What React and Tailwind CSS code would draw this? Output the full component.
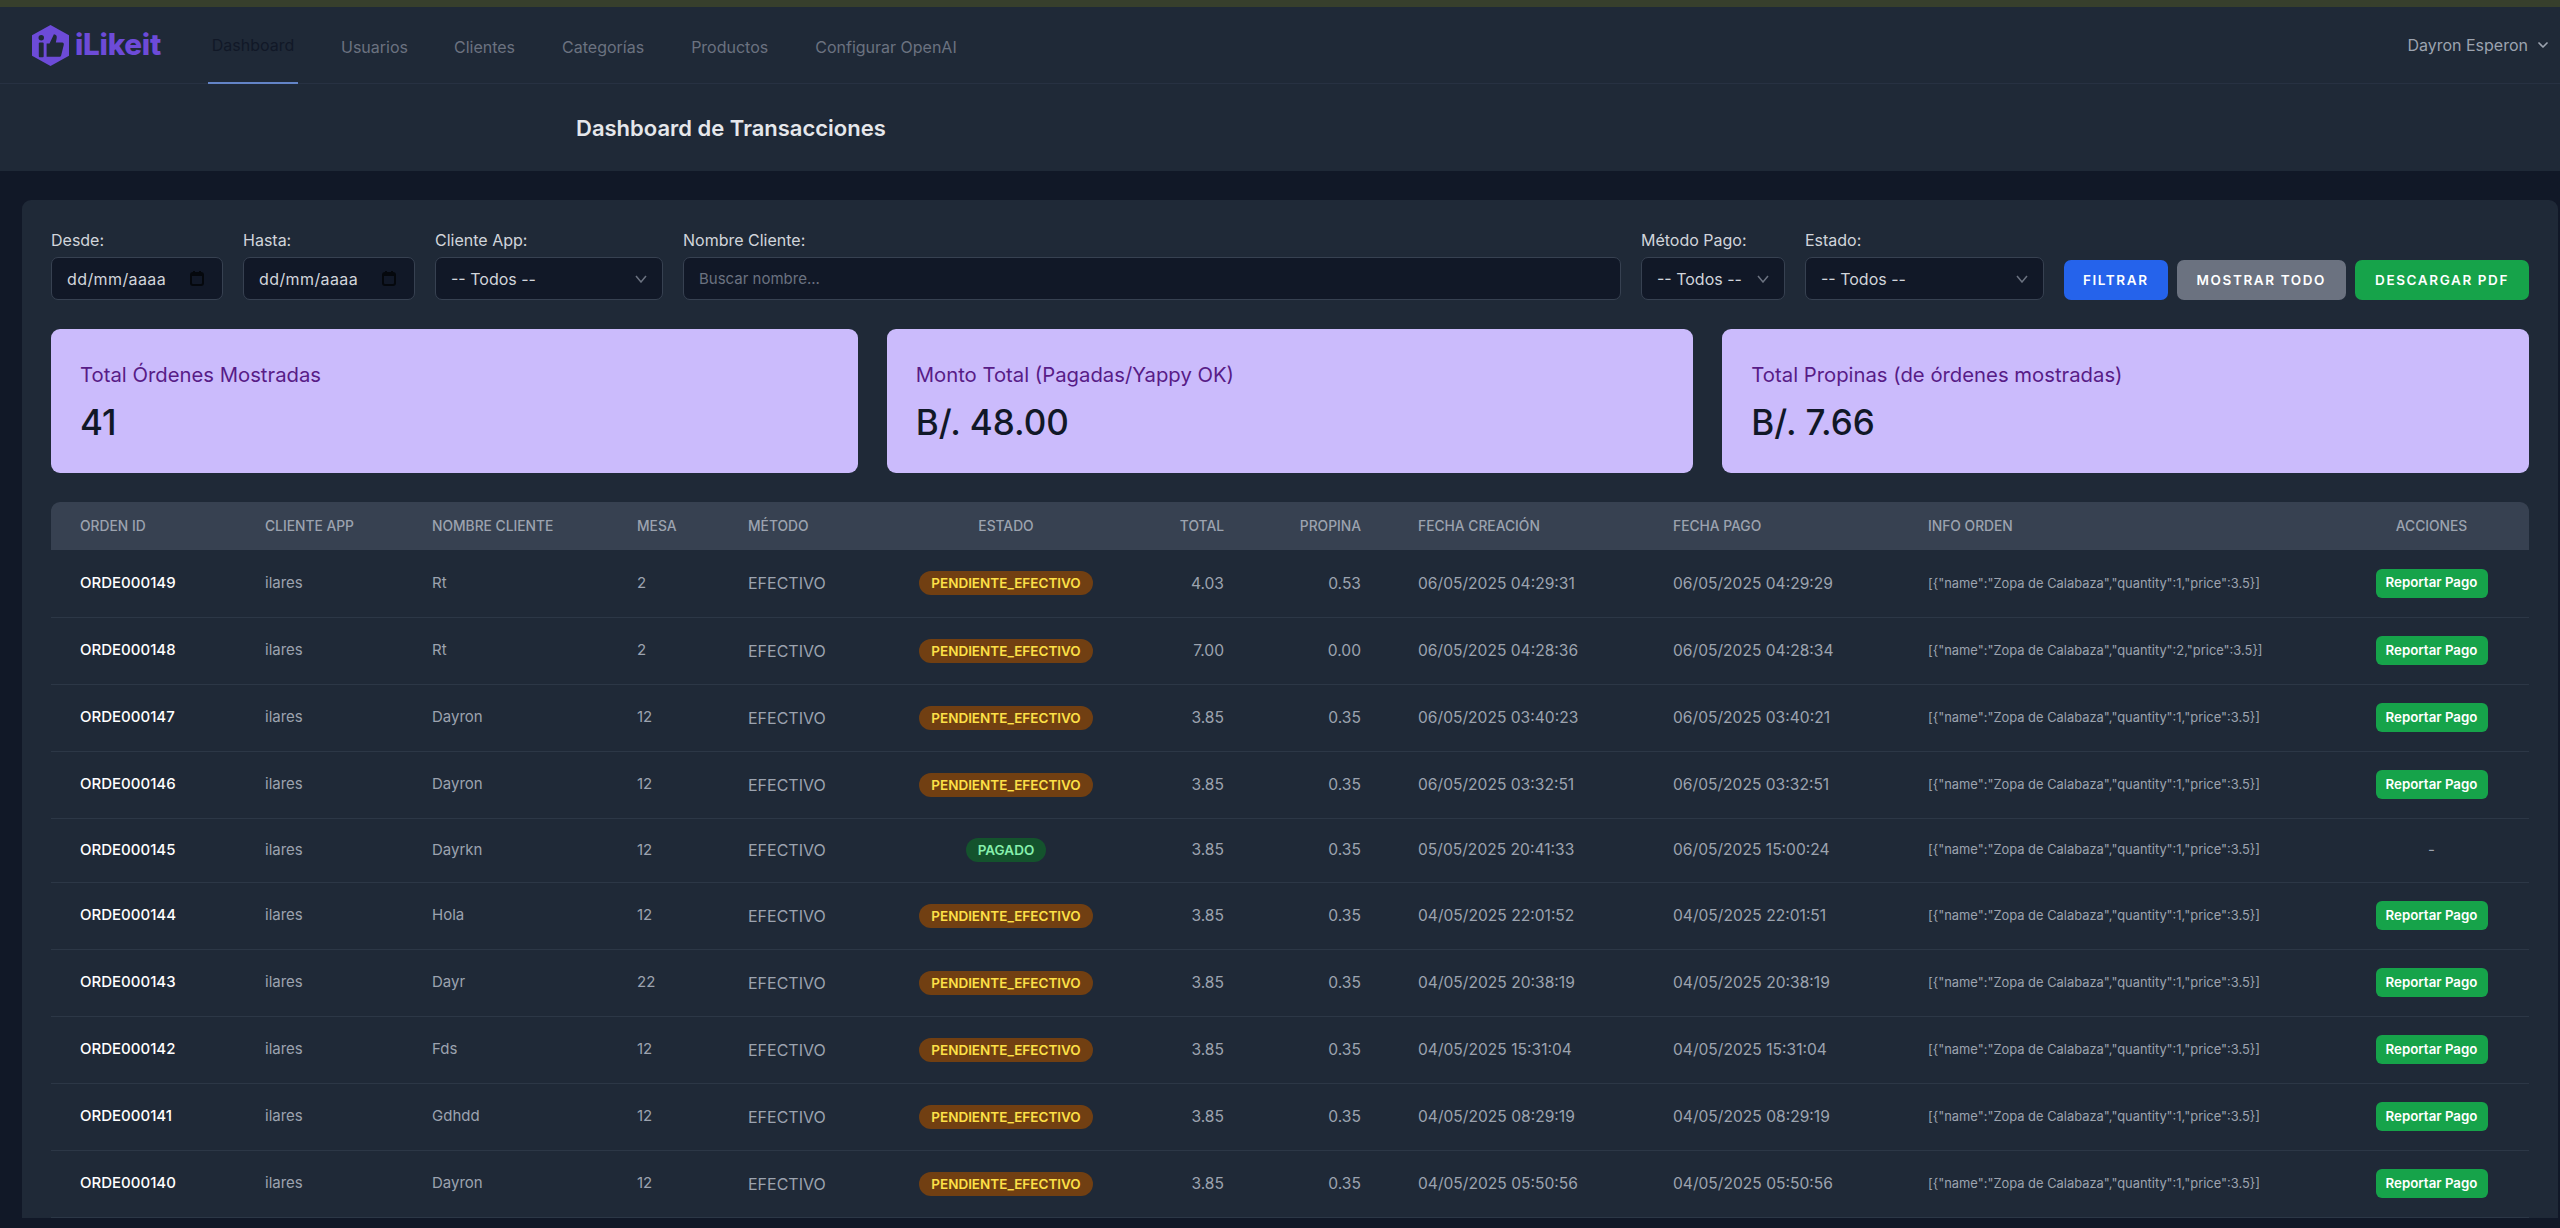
import React from "react";
import { ChevronDown } from "lucide-react";

const FONT = "font-['Inter','Liberation_Sans',sans-serif]";

const rows = [
  ["ORDE000149","Rt","2","PENDIENTE_EFECTIVO","4.03","0.53","06/05/2025 04:29:31","06/05/2025 04:29:29",1],
  ["ORDE000148","Rt","2","PENDIENTE_EFECTIVO","7.00","0.00","06/05/2025 04:28:36","06/05/2025 04:28:34",2],
  ["ORDE000147","Dayron","12","PENDIENTE_EFECTIVO","3.85","0.35","06/05/2025 03:40:23","06/05/2025 03:40:21",1],
  ["ORDE000146","Dayron","12","PENDIENTE_EFECTIVO","3.85","0.35","06/05/2025 03:32:51","06/05/2025 03:32:51",1],
  ["ORDE000145","Dayrkn","12","PAGADO","3.85","0.35","05/05/2025 20:41:33","06/05/2025 15:00:24",1],
  ["ORDE000144","Hola","12","PENDIENTE_EFECTIVO","3.85","0.35","04/05/2025 22:01:52","04/05/2025 22:01:51",1],
  ["ORDE000143","Dayr","22","PENDIENTE_EFECTIVO","3.85","0.35","04/05/2025 20:38:19","04/05/2025 20:38:19",1],
  ["ORDE000142","Fds","12","PENDIENTE_EFECTIVO","3.85","0.35","04/05/2025 15:31:04","04/05/2025 15:31:04",1],
  ["ORDE000141","Gdhdd","12","PENDIENTE_EFECTIVO","3.85","0.35","04/05/2025 08:29:19","04/05/2025 08:29:19",1],
  ["ORDE000140","Dayron","12","PENDIENTE_EFECTIVO","3.85","0.35","04/05/2025 05:50:56","04/05/2025 05:50:56",1],
];

function Field({ label, width, children }) {
  return (
    <div className={`flex flex-col gap-[7px] ${width}`}>
      <label className="text-[16px] leading-[20px] text-[#d1d5db]">{label}</label>
      {children}
    </div>
  );
}

const box = "flex h-[43px] items-center justify-between rounded-[7px] border border-[#374151] bg-[#111827] px-[15px] text-[#d1d5db]";

function DateBox() {
  return (
    <div className={box}>
      <span className="text-[16px] tracking-[0.4px]">dd/mm/aaaa</span>
      <svg width="14" height="15" viewBox="0 0 14 15" className="mr-[3px] shrink-0">
        <rect x="1" y="2" width="12" height="12" rx="2" fill="none" stroke="#05080d" strokeWidth="2" />
        <rect x="1" y="2" width="12" height="3" fill="#05080d" />
        <rect x="3" y="0" width="2" height="3" fill="#05080d" />
        <rect x="9" y="0" width="2" height="3" fill="#05080d" />
      </svg>
    </div>
  );
}

function SelectBox() {
  return (
    <div className={box}>
      <span className="text-[16px]">-- Todos --</span>
      <svg width="12" height="8" viewBox="0 0 12 8" className="shrink-0">
        <path d="M1 1L6 7L11 1" fill="none" stroke="#6b7280" strokeWidth="1.5" />
      </svg>
    </div>
  );
}

function Stat({ title, value }) {
  return (
    <div className="flex h-[144px] flex-1 flex-col rounded-[9px] bg-[#cbbbfc] px-[29px] pt-[32px]">
      <div className="text-[20.3px] leading-[28px] text-[#581c87]">{title}</div>
      <div className="mt-[13px] text-[35px] font-medium leading-[40px] text-[#111827]">{value}</div>
    </div>
  );
}

function Btn({ color, children }) {
  return (
    <button className={`h-[40px] rounded-[7px] text-[13.5px] font-semibold tracking-[1.6px] text-white ${color}`}>
      {children}
    </button>
  );
}

const th = "px-[28px] text-[13.8px] font-medium text-[#9ca3af] uppercase";

export default function App() {
  return (
    <div className={`flex h-[1228px] flex-col overflow-hidden bg-[#111827] ${FONT}`}>
      <div className="h-[7px] shrink-0 bg-[#373f2c]" />
      <nav className="flex h-[77px] shrink-0 items-stretch justify-between border-b border-[#273142] bg-[#1f2937] pl-[32px] pr-[9px]">
        <div className="flex items-stretch">
          <div className="flex w-[176px] items-center gap-[6px]">
            <svg width="37" height="41" viewBox="0 0 38 42" className="shrink-0">
              <path d="M19 0L38 10.5V31.5L19 42L0 31.5V10.5Z" fill="#6d4bd8" />
              <circle cx="9.5" cy="13" r="2.8" fill="#1f2937" />
              <rect x="7" y="18" width="5" height="15" rx="1" fill="#1f2937" />
              <path d="M15 19h3l4.5-9.5c2.4.2 3.4 2 2.8 4.2L24.5 18H31c1.4 0 2 1.2 1.6 2.4l-2.6 10.6c-.3 1-1 1.6-2 1.6H15Z" fill="#1f2937" />
            </svg>
            <span className="text-[29.7px] font-extrabold leading-none tracking-[-0.3px] text-[#6d4bd8]">iLikeit</span>
          </div>
          <div className="flex items-stretch pt-[3px] text-[16px] text-[#6b7280]">
            <a className="-mb-px flex w-[90px] items-center justify-center border-b-2 border-[#6384c7] pb-[2px] text-[#111827]">Dashboard</a>
            <a className="ml-[43px] flex items-center">Usuarios</a>
            <a className="ml-[46px] flex items-center">Clientes</a>
            <a className="ml-[47px] flex items-center">Categorías</a>
            <a className="ml-[47px] flex items-center">Productos</a>
            <a className="ml-[47px] flex items-center">Configurar OpenAI</a>
          </div>
        </div>
        <div className="flex items-center gap-[7px] text-[16px] text-[#9ca3af]">
          <span>Dayron Esperon</span>
          <ChevronDown size={16} strokeWidth={2.5} />
        </div>
      </nav>
      <header className="flex h-[87px] shrink-0 items-center bg-[#1f2937] pl-[576px]">
        <h1 className="text-[22px] font-semibold leading-none text-[#e5e7eb]">Dashboard de Transacciones</h1>
      </header>

      <main className="flex min-h-0 flex-1 flex-col pb-[10px] pl-[22px] pr-[2px] pt-[29px]">
        <div className="flex min-h-0 flex-1 flex-col overflow-hidden rounded-t-[9px] bg-[#1f2937] pl-[29px] pr-[29px] pt-[30px]">
          <div className="flex items-end gap-[20px]">
            <Field label="Desde:" width="w-[172px]"><DateBox /></Field>
            <Field label="Hasta:" width="w-[172px]"><DateBox /></Field>
            <Field label="Cliente App:" width="w-[228px]"><SelectBox /></Field>
            <Field label="Nombre Cliente:" width="flex-1">
              <input placeholder="Buscar nombre..." className="h-[43px] rounded-[7px] border border-[#374151] bg-[#111827] px-[15px] text-[15px] text-[#d1d5db] placeholder:text-[#6b7280]" />
            </Field>
            <Field label="Método Pago:" width="w-[144px]"><SelectBox /></Field>
            <Field label="Estado:" width="w-[239px]"><SelectBox /></Field>
            <div className="flex gap-[9px]">
              <Btn color="bg-[#2563eb] px-[19px]">FILTRAR</Btn>
              <Btn color="bg-[#6b7280] px-[20px]">MOSTRAR TODO</Btn>
              <Btn color="bg-[#16a34a] px-[20px]">DESCARGAR PDF</Btn>
            </div>
          </div>

          <div className="mt-[29px] flex gap-[29px]">
            <Stat title="Total Órdenes Mostradas" value="41" />
            <Stat title="Monto Total (Pagadas/Yappy OK)" value="B/. 48.00" />
            <Stat title="Total Propinas (de órdenes mostradas)" value="B/. 7.66" />
          </div>

          <table className="mt-[29px] w-full table-fixed border-collapse">
            <colgroup>
              <col className="w-[186px]" />
              <col className="w-[167px]" />
              <col className="w-[205px]" />
              <col className="w-[111px]" />
              <col className="w-[172px]" />
              <col className="w-[228px]" />
              <col className="w-[132px]" />
              <col className="w-[137px]" />
              <col className="w-[256px]" />
              <col className="w-[254px]" />
              <col className="w-[435px]" />
              <col />
            </colgroup>
            <thead>
              <tr className="h-[48px] bg-[#374151]">
                <th className={`${th} rounded-tl-[9px] text-left`}><span className="ml-px">Orden ID</span></th>
                <th className={`${th} text-left`}>Cliente App</th>
                <th className={`${th} text-left`}>Nombre Cliente</th>
                <th className={`${th} text-left`}>Mesa</th>
                <th className={`${th} text-left`}>Método</th>
                <th className={`${th} text-center`}>Estado</th>
                <th className={`${th} text-right`}>Total</th>
                <th className={`${th} text-right`}>Propina</th>
                <th className={`${th} text-left`}><span className="ml-px">Fecha Creación</span></th>
                <th className={`${th} text-left`}>Fecha Pago</th>
                <th className={`${th} text-left`}><span className="ml-px">Info Orden</span></th>
                <th className={`${th} rounded-tr-[9px] text-center`}>Acciones</th>
              </tr>
            </thead>
            <tbody className="text-[15px] text-[#9ca3af]">
              {rows.map((r) => {
                const paid = r[3] === "PAGADO";
                return (
                  <tr key={r[0]} className={`border-b border-[#2c3746] ${paid ? "h-[64px]" : "h-[67px]"}`}>
                    <td className="pl-[29px] pr-[27px] font-medium text-white">{r[0]}</td>
                    <td className="px-[28px]">ilares</td>
                    <td className="px-[28px]">{r[1]}</td>
                    <td className="px-[28px]">{r[2]}</td>
                    <td className="px-[28px] text-[16px]">EFECTIVO</td>
                    <td className="px-0 text-center">
                      {paid ? (
                        <span className="inline-block rounded-full bg-[#14532d] px-[12px] text-[13.5px] font-semibold leading-[24px] text-[#86efac]">PAGADO</span>
                      ) : (
                        <span className="inline-block rounded-full bg-[#713f12] px-[12px] text-[13.5px] font-semibold leading-[24px] text-[#fde047]">PENDIENTE_EFECTIVO</span>
                      )}
                    </td>
                    <td className="px-[28px] text-right text-[15.6px]">{r[4]}</td>
                    <td className="px-[28px] text-right text-[15.6px]">{r[5]}</td>
                    <td className="pl-[29px] pr-[27px] text-[15.6px]">{r[6]}</td>
                    <td className="px-[28px] text-[15.6px]">{r[7]}</td>
                    <td className="pl-[29px] pr-[27px] text-[12.9px]">{`[{"name":"Zopa de Calabaza","quantity":${r[8]},"price":3.5}]`}</td>
                    <td className="px-0 text-center">
                      {paid ? "-" : (
                        <button className="h-[29px] w-[112px] rounded-[6px] bg-[#16a34a] text-[13.3px] font-semibold text-white">Reportar Pago</button>
                      )}
                    </td>
                  </tr>
                );
              })}
            </tbody>
          </table>
        </div>
      </main>
    </div>
  );
}
